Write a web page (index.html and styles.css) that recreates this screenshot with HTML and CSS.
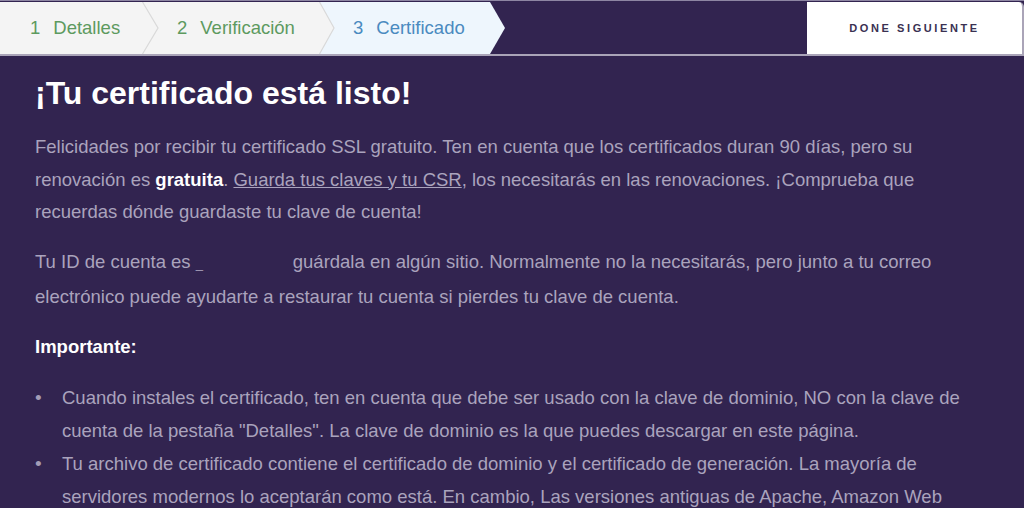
FILE: index.html
```html
<!DOCTYPE html>
<html lang="es">
<head>
<meta charset="utf-8">
<title>Certificado</title>
<link rel="stylesheet" href="styles.css">
</head>
<body>
<header class="wizard">
  <nav class="steps">
    <div class="step step-1"><span class="num">1</span><span>Detalles</span></div>
    <div class="step step-2">
      <svg class="sep" viewBox="0 0 17 52" width="17" height="52"><polygon points="0,0 16,26 0,52" fill="#f4f4f4"/><polyline points="0.5,0 16,26 0.5,52" fill="none" stroke="#d9d9d9" stroke-width="1.2"/></svg>
      <span class="num">2</span><span>Verificación</span></div>
    <div class="step step-3">
      <svg class="sep" viewBox="0 0 17 52" width="17" height="52"><polygon points="0,0 15,26 0,52" fill="#f4f4f4"/><polyline points="0.5,0 15,26 0.5,52" fill="none" stroke="#d9d9d9" stroke-width="1.2"/></svg>
      <span class="num">3</span><span>Certificado</span></div>
  </nav>
  <div class="fill"></div>
  <button class="done">DONE SIGUIENTE</button>
</header>
<main class="content">
  <h1 class="title">¡Tu certificado está listo!</h1>
  <p class="para">Felicidades por recibir tu certificado SSL gratuito. Ten en cuenta que los certificados duran 90 días, pero su renovación es <strong>gratuita</strong>. <a class="link" href="#">Guarda tus claves y tu CSR</a>, los necesitarás en las renovaciones. ¡Comprueba que recuerdas dónde guardaste tu clave de cuenta!</p>
  <p class="para">Tu ID de cuenta es <span class="acct"><span class="acct-mark">_</span></span>guárdala en algún sitio. Normalmente no la necesitarás, pero junto a tu correo electrónico puede ayudarte a restaurar tu cuenta si pierdes tu clave de cuenta.</p>
  <p class="para"><strong>Importante:</strong></p>
  <ul class="notes">
    <li>Cuando instales el certificado, ten en cuenta que debe ser usado con la clave de dominio, NO con la clave de cuenta de la pestaña "Detalles". La clave de dominio es la que puedes descargar en este página.</li>
    <li>Tu archivo de certificado contiene el certificado de dominio y el certificado de generación. La mayoría de servidores modernos lo aceptarán como está. En cambio, Las versiones antiguas de Apache, Amazon Web Services y otros servidores necesitan que los subas por separado.</li>
  </ul>
</main>
</body>
</html>
```

FILE: styles.css
```css
html, body {
  margin: 0;
  padding: 0;
}
body {
  background: #322450;
  font-family: "Liberation Sans", Arial, sans-serif;
  overflow: hidden;
  height: 508px;
}
.wizard {
  display: flex;
  align-items: stretch;
  height: 52px;
  border-top: 1px solid #8e86a3;
  padding-top: 1px;
  border-bottom: 2px solid #aaa4b8;
  background: #322450;
}
.steps {
  display: flex;
  height: 52px;
}
.step {
  position: relative;
  display: flex;
  align-items: center;
  font-size: 18.5px;
  color: #5d9a5f;
  background: #f4f4f4;
  box-sizing: border-box;
}
.step .num {
  margin-right: 13px;
}
.step-1 {
  width: 142px;
  padding-left: 30px;
}
.step-2 {
  width: 177px;
  padding-left: 35px;
}
.step-3 {
  width: 186px;
  padding-left: 34px;
  color: #4a8ac0;
  background: #eef6fd;
  clip-path: polygon(0 0, calc(100% - 15px) 0, 100% 50%, calc(100% - 15px) 100%, 0 100%);
}
.sep {
  position: absolute;
  left: 0;
  top: 0;
  display: block;
}
.fill {
  flex: 1;
}
.done {
  width: 217px;
  margin: 0;
  border: none;
  border-right: 2px solid #aaa4b8;
  border-radius: 0 5px 0 0;
  background: #ffffff;
  font-family: "Liberation Sans", Arial, sans-serif;
  font-weight: bold;
  font-size: 11px;
  letter-spacing: 2.6px;
  color: #3a3152;
  padding: 0;
  box-sizing: border-box;
}
.content {
  padding: 18px 59px 0 35px;
  color: #aaa3bd;
  font-size: 18.5px;
  line-height: 32.5px;
}
.title {
  margin: 0 0 19px;
  font-size: 32px;
  line-height: 38px;
  font-weight: bold;
  color: #ffffff;
}
.para {
  margin: 0 0 17.5px;
}
.para strong {
  color: #ffffff;
}
.link {
  color: #aaa3bd;
  text-decoration: underline;
}
.acct {
  display: inline-block;
  width: 97px;
}
.acct-mark {
  font-size: 13px;
}
.notes {
  list-style: none;
  margin: 0;
  padding: 0 0 0 27px;
}
.notes li {
  line-height: 33px;
}
.notes li::before {
  content: "•";
  display: inline-block;
  width: 27px;
  margin-left: -27px;
  box-sizing: border-box;
  font-size: 19px;
  color: #a39cb6;
}
```
